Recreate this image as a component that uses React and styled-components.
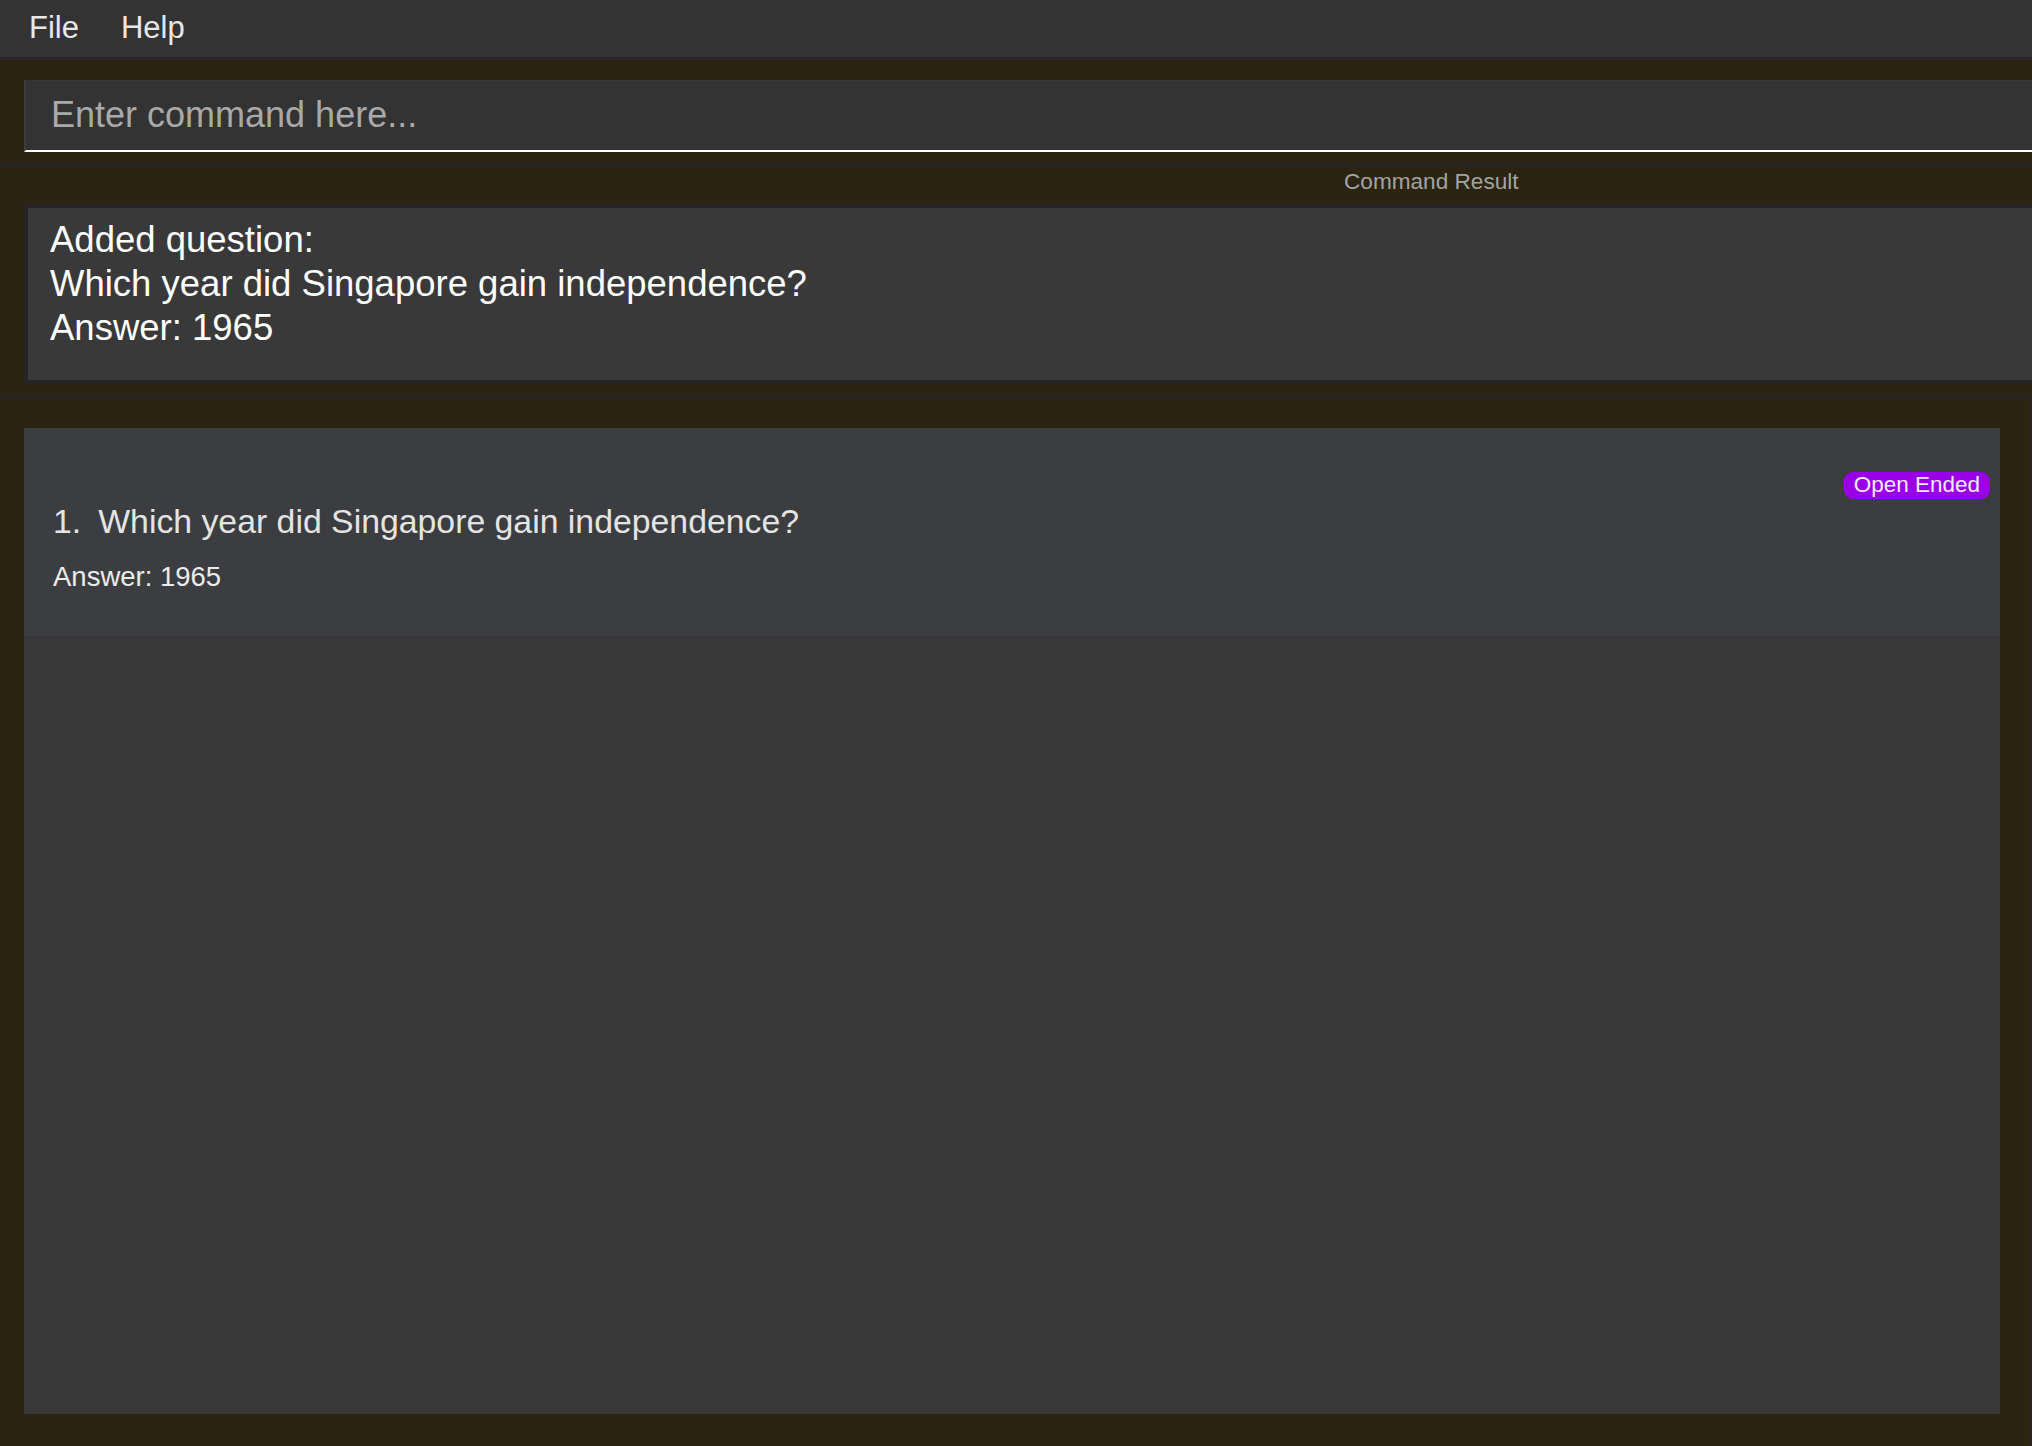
import React from "react";
import styled, { createGlobalStyle } from "styled-components";

const Global = createGlobalStyle`
  html, body {
    margin: 0;
    padding: 0;
    background: #2c2410;
    overflow: hidden;
  }
  body {
    font-family: "Liberation Sans", Arial, sans-serif;
  }
  * { box-sizing: border-box; }
`;

const Window = styled.div`
  width: 2032px;
  height: 1446px;
  display: flex;
  flex-direction: column;
  background: #2c2410;
  overflow: hidden;
`;

const MenuBar = styled.div`
  height: 60px;
  flex: none;
  display: flex;
  align-items: center;
  gap: 42px;
  padding: 0 0 2px 29px;
  background: #333333;
  border-bottom: 3px solid #282828;
`;

const MenuItem = styled.span`
  font-size: 31px;
  line-height: 1;
  color: #e8e8e8;
`;

const CommandSection = styled.div`
  flex: none;
  height: 106px;
  padding: 20px 0 0 24px;
  border-bottom: 4px solid #252525;
`;

const CommandBox = styled.div`
  width: 2100px;
  height: 72px;
  display: flex;
  align-items: center;
  padding: 0 0 2px 25px;
  background: #333333;
  border-left: 2px solid #3d3d3d;
  border-top: 1px solid #383838;
  border-bottom: 2px solid #ffffff;
`;

const Placeholder = styled.span`
  font-size: 36px;
  line-height: 1;
  color: #a9a9a9;
`;

const ResultSection = styled.div`
  flex: none;
  height: 232px;
  display: flex;
  flex-direction: column;
  border-bottom: 4px solid #252525;
`;

const ResultLabel = styled.div`
  height: 38px;
  display: flex;
  align-items: center;
  padding: 0 0 7px 1344px;
  font-size: 22.6px;
  color: #a3a3a3;
`;

const ResultFrame = styled.div`
  margin-left: 24px;
  width: 2100px;
  border: 4px solid #252525;
  border-right: none;
`;

const ResultBox = styled.div`
  height: 172px;
  padding: 10px 0 0 22px;
  background: #393939;
  color: #ffffff;
  font-size: 36.5px;
  line-height: 44px;
`;

const ListSection = styled.div`
  flex: 1;
  padding: 30px 30px 32px 24px;
  border-right: 2px solid #252525;
  display: flex;
`;

const ListPanel = styled.div`
  flex: 1;
  background: #383838;
  display: flex;
  flex-direction: column;
`;

const Card = styled.div`
  height: 208px;
  display: flex;
  justify-content: space-between;
  align-items: flex-start;
  background: #3c3d40;
  padding: 0 10px 0 29px;
`;

const CardText = styled.div`
  display: flex;
  flex-direction: column;
  padding-top: 73px;
`;

const Question = styled.div`
  display: flex;
  gap: 17px;
  font-size: 33.8px;
  line-height: 40px;
  color: #e4e4e4;
`;

const Answer = styled.div`
  margin-top: 19px;
  font-size: 27.5px;
  line-height: 33px;
  color: #ececec;
`;

const Badge = styled.span`
  margin-top: 44px;
  height: 27px;
  padding: 0 10px;
  display: inline-flex;
  align-items: center;
  border-radius: 9px;
  background: ${(p) => p.$color};
  color: #f2eaff;
  font-size: 22.5px;
  line-height: 1;
`;

export default function App() {
  return (
    <Window>
      <Global />
      <MenuBar>
        <MenuItem>File</MenuItem>
        <MenuItem>Help</MenuItem>
      </MenuBar>
      <CommandSection>
        <CommandBox>
          <Placeholder>Enter command here...</Placeholder>
        </CommandBox>
      </CommandSection>
      <ResultSection>
        <ResultLabel>Command Result</ResultLabel>
        <ResultFrame>
          <ResultBox>
            Added question:
            <br />
            Which year did Singapore gain independence?
            <br />
            Answer: 1965
          </ResultBox>
        </ResultFrame>
      </ResultSection>
      <ListSection>
        <ListPanel>
          <Card>
            <CardText>
              <Question>
                <span>1.</span>
                <span>Which year did Singapore gain independence?</span>
              </Question>
              <Answer>Answer: 1965</Answer>
            </CardText>
            <Badge $color="#9a00e8">Open Ended</Badge>
          </Card>
        </ListPanel>
      </ListSection>
    </Window>
  );
}
